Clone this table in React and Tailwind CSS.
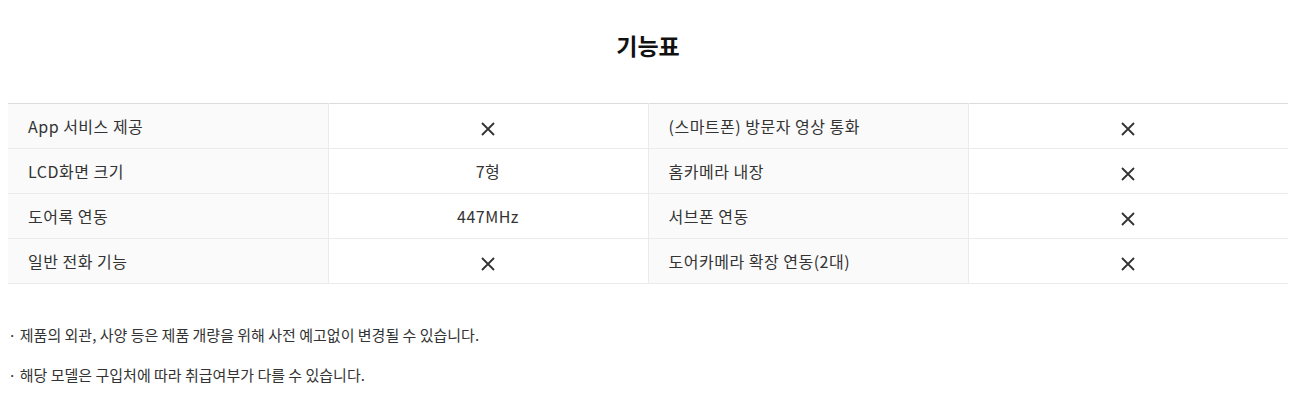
import React from 'react';

const rows = [
  ['App 서비스 제공', 'x', '(스마트폰) 방문자 영상 통화', 'x'],
  ['LCD화면 크기', '7형', '홈카메라 내장', 'x'],
  ['도어록 연동', '447MHz', '서브폰 연동', 'x'],
  ['일반 전화 기능', 'x', '도어카메라 확장 연동(2대)', 'x'],
];

function Cross() {
  return (
    <svg width="16" height="16" viewBox="0 0 16 16" className="inline-block">
      <path d="M2 2 L14 14 M14 2 L2 14" stroke="#333" strokeWidth="1.8" fill="none" />
    </svg>
  );
}

function Value({ v }) {
  return v === 'x' ? <Cross /> : v;
}

export default function App() {
  return (
    <div className="w-[1296px] h-[411px] bg-white px-2 text-[#333]" style={{ fontFamily: '"Noto Sans CJK KR", "Noto Sans", sans-serif' }}>
      <h2 className="pt-[28px] text-center text-[23px] leading-[34px] font-bold text-[#111]">기능표</h2>
      <table className="mt-[41px] w-full table-fixed border-collapse border-t border-[#dcdcdc] text-[16px] tracking-[0.5px]">
        <tbody>
          {rows.map((r, i) => (
            <tr key={i} className="h-[45px] border-b border-[#ebebeb]">
              <td className="w-1/4 bg-[#fafafa] pl-5 border-r border-[#ebebeb]">{r[0]}</td>
              <td className="w-1/4 text-center border-r border-[#ebebeb]"><Value v={r[1]} /></td>
              <td className="w-1/4 bg-[#fafafa] pl-5 border-r border-[#ebebeb]">{r[2]}</td>
              <td className="w-1/4 text-center"><Value v={r[3]} /></td>
            </tr>
          ))}
        </tbody>
      </table>
      <div className="mt-[39px] text-[15px] leading-[24px] flex flex-col gap-4">
        <p>· 제품의 외관, 사양 등은 제품 개량을 위해 사전 예고없이 변경될 수 있습니다.</p>
        <p>· 해당 모델은 구입처에 따라 취급여부가 다를 수 있습니다.</p>
      </div>
    </div>
  );
}
